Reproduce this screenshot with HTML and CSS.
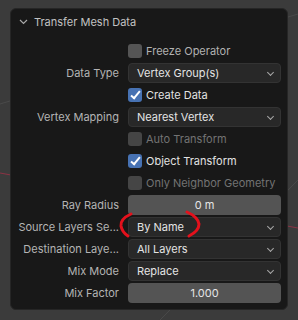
FILE: index.html
```html
<!DOCTYPE html>
<html lang="en">
<head>
    <meta charset="UTF-8">
    <meta name="viewport" content="width=device-width, initial-scale=1.0">
    <title>Transfer Mesh Data</title>
    <link rel="stylesheet" href="styles.css">
</head>
<body>
    <!-- viewport lines behind the popover -->
    <svg class="viewport" width="298" height="320" viewBox="0 0 298 320">
        <line x1="0" y1="104" x2="298" y2="14" stroke="#4a4a4a" stroke-width="1"/>
        <line x1="160" y1="320" x2="298" y2="180" stroke="#4a4a4a" stroke-width="1"/>
        <line x1="0" y1="173" x2="298" y2="228" stroke="#8a3344" stroke-width="1.2"/>
    </svg>

    <div class="panel">
        <div class="panel-header">
            <svg class="chevron" width="9" height="6" viewBox="0 0 9 6">
                <path d="M1 1 L4.5 4.5 L8 1" fill="none" stroke="#a8a8a8" stroke-width="1.2"/>
            </svg>
            <span>Transfer Mesh Data</span>
        </div>

        <div class="props">
            <span class="label"></span>
            <label class="check">
                <span class="box"></span>
                <span class="check-text dim">Freeze Operator</span>
            </label>

            <span class="label">Data Type</span>
            <div class="menu">Vertex Group(s)</div>

            <span class="label"></span>
            <label class="check">
                <span class="box on"></span>
                <span class="check-text">Create Data</span>
            </label>

            <span class="label">Vertex Mapping</span>
            <div class="menu">Nearest Vertex</div>

            <span class="label"></span>
            <label class="check disabled">
                <span class="box"></span>
                <span class="check-text">Auto Transform</span>
            </label>

            <span class="label"></span>
            <label class="check">
                <span class="box on"></span>
                <span class="check-text">Object Transform</span>
            </label>

            <span class="label"></span>
            <label class="check disabled">
                <span class="box"></span>
                <span class="check-text">Only Neighbor Geometry</span>
            </label>

            <span class="label">Ray Radius</span>
            <div class="num">0 m</div>

            <span class="label">Source Layers Se...</span>
            <div class="menu">By Name</div>

            <span class="label">Destination Laye...</span>
            <div class="menu">All Layers</div>

            <span class="label">Mix Mode</span>
            <div class="menu">Replace</div>

            <span class="label">Mix Factor</span>
            <div class="num">1.000</div>
        </div>
    </div>

    <!-- red marker drawn over the screenshot -->
    <svg class="marker" width="298" height="320" viewBox="0 0 298 320">
        <path d="M131 214 Q120 219 121 226 Q122 232 128 236" fill="none" stroke="#e3111c" stroke-width="3" stroke-linecap="round"/>
        <path d="M187 212 Q198 217 199 224 Q199 231 189 236" fill="none" stroke="#e3111c" stroke-width="3" stroke-linecap="round"/>
    </svg>
</body>
</html>
```

FILE: styles.css
```css
body {
    margin: 0;
    width: 298px;
    height: 320px;
    overflow: hidden;
    background: #3b3b3b;
    font-family: Inter, "Noto Sans", sans-serif;
    font-size: 11px;
    position: relative;
}

.viewport,
.marker {
    position: absolute;
    left: 0;
    top: 0;
}

.marker {
    pointer-events: none;
}

.panel {
    position: relative;
    margin: 8px 0 0 10px;
    width: 278px;
    height: 302px;
    box-sizing: border-box;
    background: #181818;
    border: 1px solid #262626;
    border-radius: 6px;
}

.panel-header {
    display: flex;
    align-items: center;
    height: 25px;
    padding-left: 8px;
    color: #c2c2c2;
}

.chevron {
    margin-right: 6px;
}

.props {
    display: grid;
    grid-template-columns: 108px 153px;
    grid-auto-rows: 20px;
    column-gap: 9px;
    row-gap: 2px;
    padding-top: 7px;
}

.label {
    display: flex;
    align-items: center;
    justify-content: flex-end;
    color: #b4b4b4;
    white-space: nowrap;
}

.check {
    display: flex;
    align-items: center;
    color: #e2e2e2;
    white-space: nowrap;
}

.box {
    flex: none;
    width: 14px;
    height: 14px;
    border-radius: 3px;
    background: #555555;
    margin-right: 4px;
    position: relative;
}

.box.on {
    background: #4772b3;
}

.box.on::after {
    content: "";
    position: absolute;
    left: 5px;
    top: 1px;
    width: 3px;
    height: 8px;
    border: solid #ffffff;
    border-width: 0 2px 2px 0;
    transform: rotate(40deg);
}

.check-text.dim {
    color: #b2b2b2;
}

.check.disabled {
    color: #737373;
}

.check.disabled .box {
    background: #454545;
}

.menu {
    display: flex;
    align-items: center;
    box-sizing: border-box;
    padding-left: 8px;
    background: #282828;
    border: 1px solid #333333;
    border-radius: 4px;
    color: #e4e4e4;
    position: relative;
}

.menu::after {
    content: "";
    position: absolute;
    right: 7px;
    top: 6px;
    width: 4px;
    height: 4px;
    border: solid #a8a8a8;
    border-width: 0 1px 1px 0;
    transform: rotate(45deg);
}

.num {
    display: flex;
    align-items: center;
    justify-content: center;
    background: #545454;
    border-radius: 4px;
    color: #e6e6e6;
}
```
